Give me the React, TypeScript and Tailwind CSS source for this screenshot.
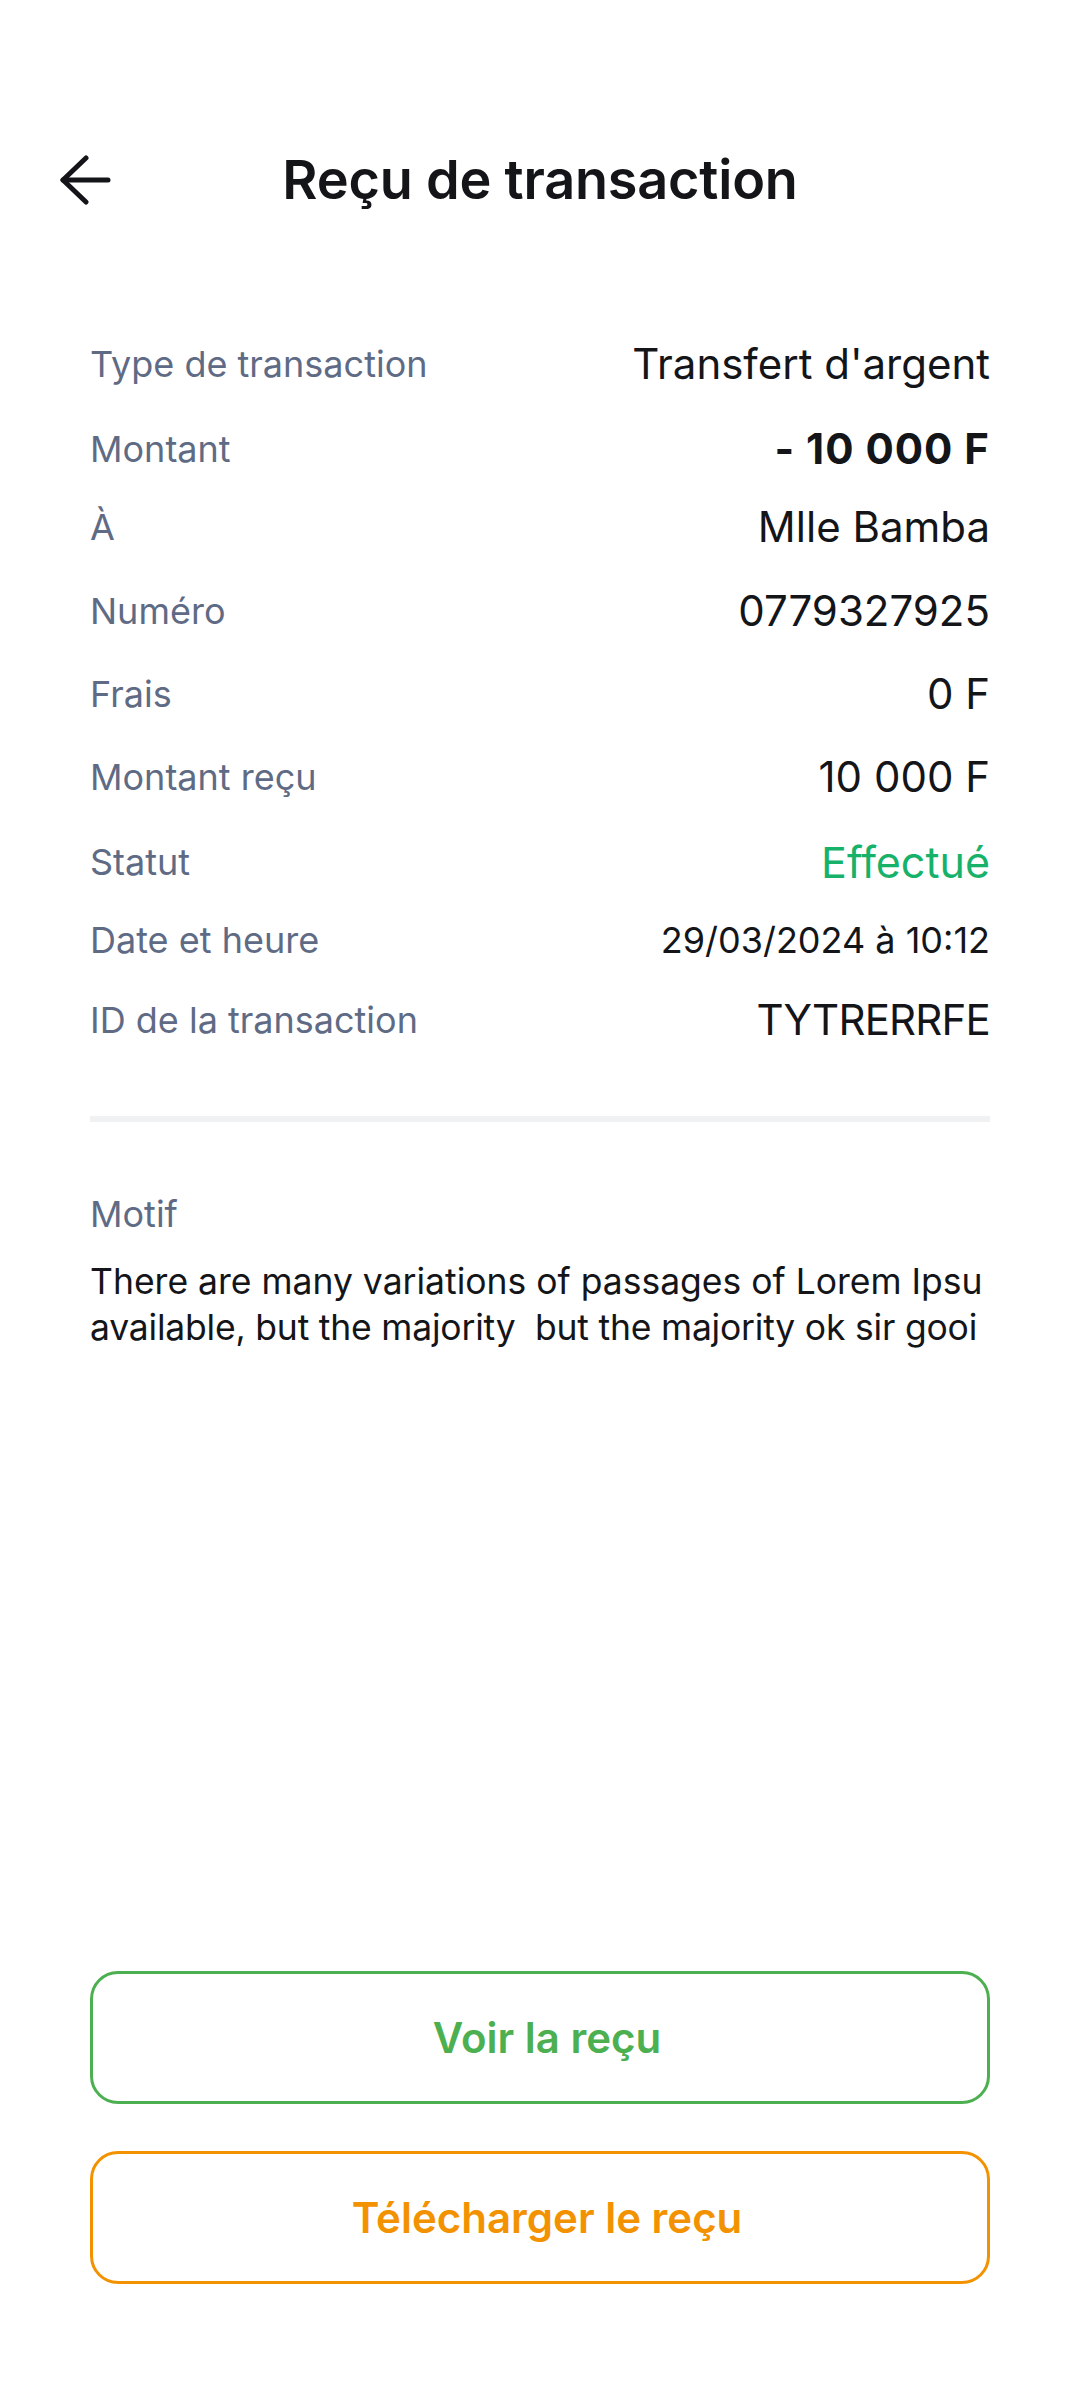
import React from "react";

type Row = {
  label: string;
  value: string;
  mt: string;
  valueClass: string;
};

const rows: Row[] = [
  { label: "Type de transaction", value: "Transfert d'argent", mt: "mt-[100px]", valueClass: "text-[42px] text-[#141518]" },
  { label: "Montant", value: "- 10 000 F", mt: "mt-[37px]", valueClass: "text-[42px] font-bold text-[#141518] tracking-[1px]" },
  { label: "À", value: "Mlle Bamba", mt: "mt-[30px]", valueClass: "text-[42px] text-[#141518]" },
  { label: "Numéro", value: "0779327925", mt: "mt-[36px]", valueClass: "text-[42px] text-[#141518]" },
  { label: "Frais", value: "0 F", mt: "mt-[35px]", valueClass: "text-[42px] text-[#141518]" },
  { label: "Montant reçu", value: "10 000 F", mt: "mt-[35px]", valueClass: "text-[42px] text-[#141518]" },
  { label: "Statut", value: "Effectué", mt: "mt-[37px]", valueClass: "text-[43px] text-[#17B26A]" },
  { label: "Date et heure", value: "29/03/2024 à 10:12", mt: "mt-[30px]", valueClass: "text-[36px] text-[#141518]" },
  { label: "ID de la transaction", value: "TYTRERRFE", mt: "mt-[32px]", valueClass: "text-[42px] text-[#141518] tracking-[-0.8px]" },
];

export default function App() {
  return (
    <div
      className="w-[1080px] h-[2400px] bg-white flex flex-col pt-[120px]"
      style={{ fontFamily: "Inter, 'Noto Sans', sans-serif" }}
    >
      {/* Header */}
      <div className="grid grid-cols-[1fr_auto_1fr] items-center h-[120px]">
        <div className="pl-[59px] flex items-center">
          <svg width="52" height="50" viewBox="0 0 52 50" fill="none">
            <path
              d="M27 3 L4 25 L27 47"
              stroke="#141518"
              strokeWidth="5"
              strokeLinecap="round"
              strokeLinejoin="round"
            />
            <path d="M4 25 H49" stroke="#141518" strokeWidth="5" strokeLinecap="round" />
          </svg>
        </div>
        <h1 className="text-[54px] font-semibold text-[#141518] leading-none tracking-[-0.2px]">
          Reçu de transaction
        </h1>
        <div />
      </div>

      {/* Details */}
      <div className="px-[90px] flex flex-col">
        {rows.map((r) => (
          <div key={r.label} className={`${r.mt} h-[48px] flex items-center justify-between`}>
            <span className="text-[36px] text-[#5F6B85] leading-[48px]">{r.label}</span>
            <span className={`${r.valueClass} leading-[48px]`}>{r.value}</span>
          </div>
        ))}

        <div className="mt-[72px] h-[6px] bg-[#F0F1F3]" />

        <div className="mt-[68px] text-[36px] text-[#5F6B85] leading-[48px]">Motif</div>
        <div className="mt-[21px] text-[35.5px] text-[#141518] leading-[46px]">
          <div className="whitespace-nowrap">There are many variations of passages of Lorem Ipsu</div>
          <div className="whitespace-nowrap tracking-[-0.2px]">available, but the majority&nbsp; but the majority ok sir gooi</div>
        </div>
      </div>

      <div className="flex-1" />

      {/* Buttons */}
      <div className="px-[90px] flex flex-col gap-[47px] pb-[116px]">
        <button className="h-[133px] w-full rounded-[28px] border-[3px] border-[#4CAF50] bg-white flex items-center justify-center pl-[14px]">
          <span className="text-[42px] font-semibold text-[#4CAF50]">Voir la reçu</span>
        </button>
        <button className="h-[133px] w-full rounded-[28px] border-[3px] border-[#F39200] bg-white flex items-center justify-center pl-[14px]">
          <span className="text-[42px] font-semibold text-[#F39200]">Télécharger le reçu</span>
        </button>
      </div>
    </div>
  );
}
